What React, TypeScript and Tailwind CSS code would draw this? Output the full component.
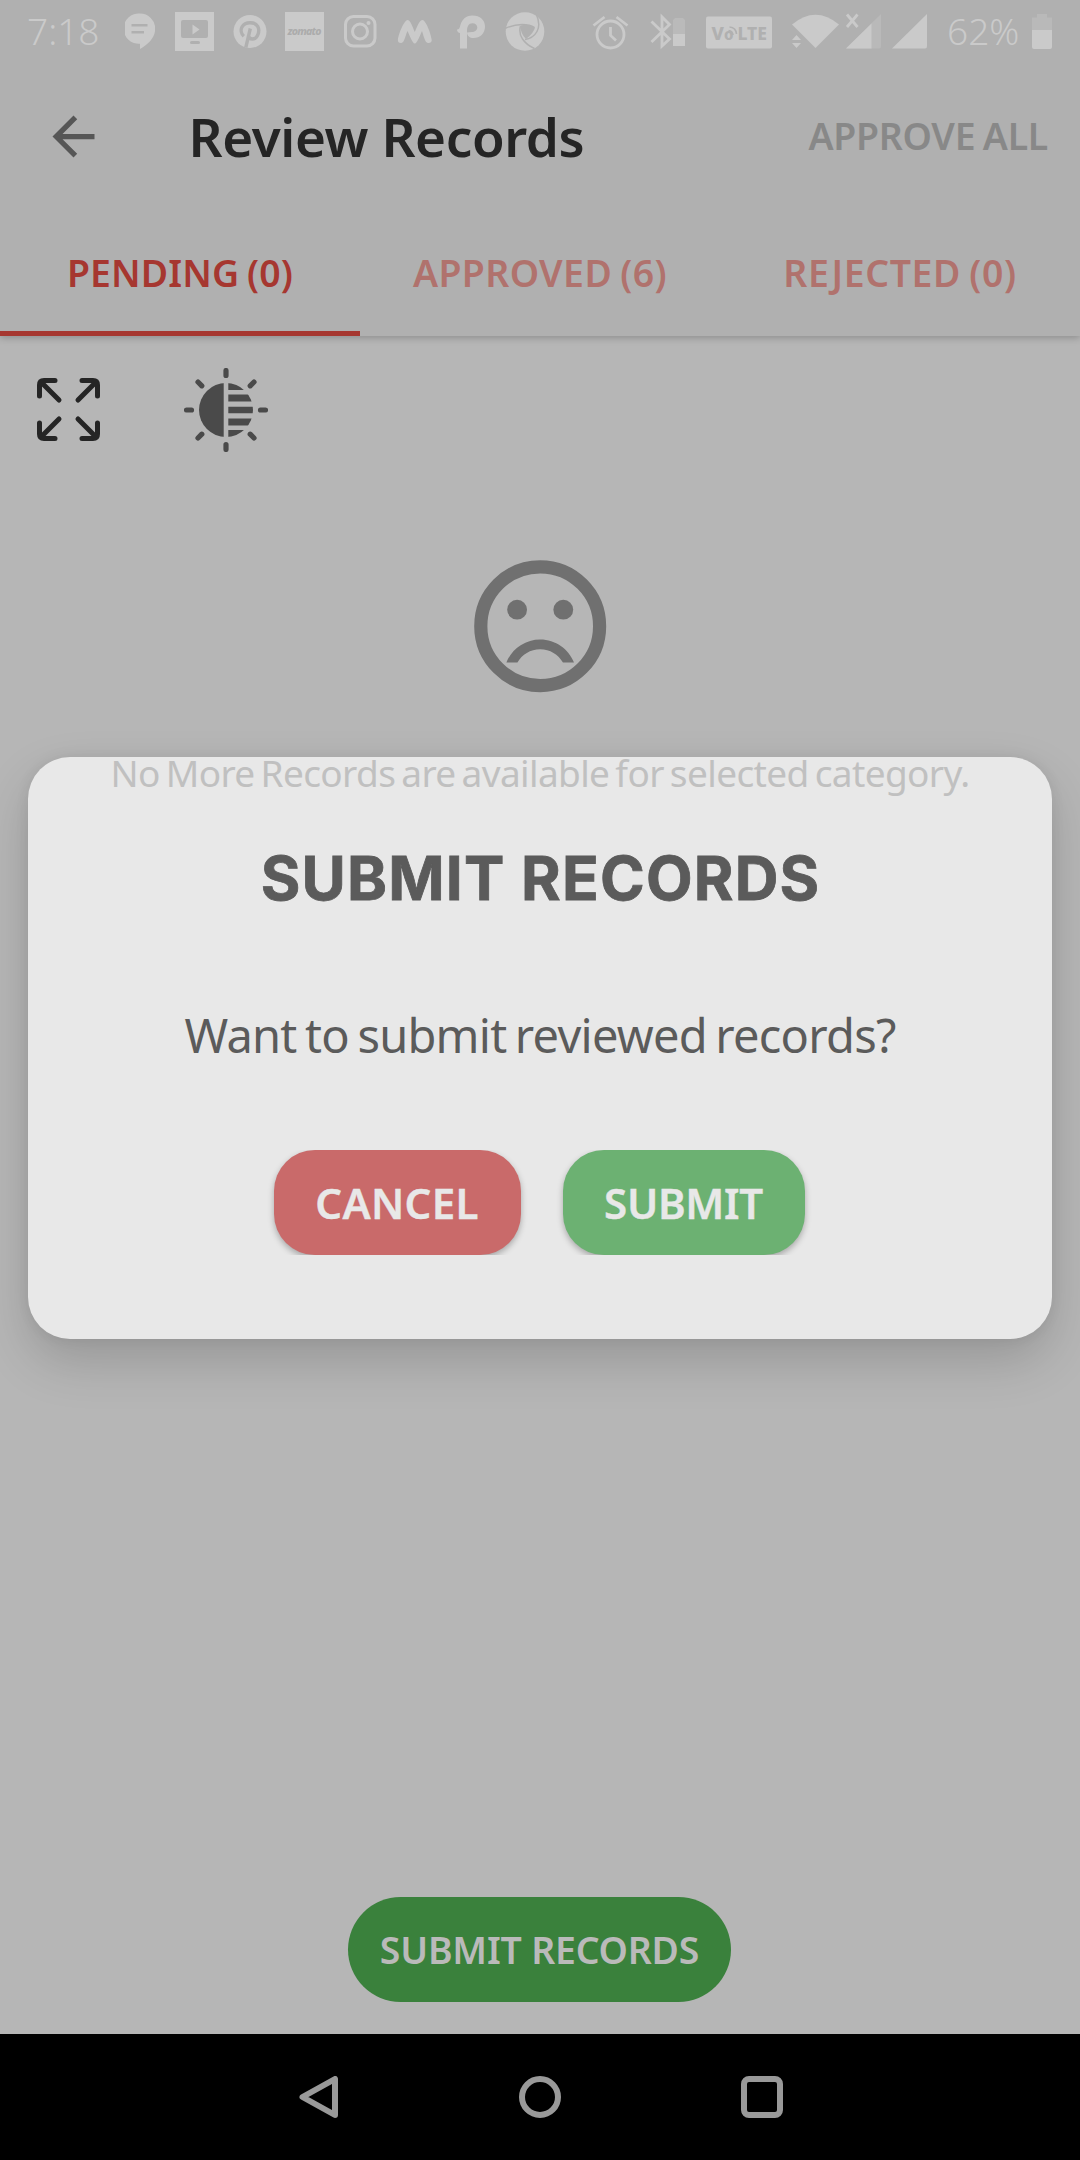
import type { ReactNode } from "react";

type GlyphProps = { x: number; w: number; className?: string; children: ReactNode };

/* Status glyphs share one 64px tall coordinate strip; each svg shows its own slice. */
function Glyph({ x, w, className = "", children }: GlyphProps) {
  return (
    <svg width={w} height={64} viewBox={`${x} 0 ${w} 64`} fill="currentColor" className={`shrink-0 ${className}`}>
      {children}
    </svg>
  );
}

function StatusBar() {
  return (
    <div className="flex h-[66px] items-start pl-[27px] text-[#cacaca]">
      <span className="w-[98px] text-[37px] leading-[61px] font-light">7:18</span>
      <Glyph x={125} w={30}>
        <path d="M140 13.500a15.200 15.200 0 1 0 0 30.300V49c9-5 15.200-12 15.200-20.300A15.200 15.200 0 0 0 140 13.500Z" />
        <path d="M131.500 24h16v2.600h-16zM131.500 31h12.500v2.600h-12.500z" fill="#b0b0b0" />
      </Glyph>
      <Glyph x={175} w={39} className="ml-[20px]">
        <path d="M175 12h39v39h-39z" />
        <rect x="181" y="20" width="27" height="18" rx="2" fill="#b0b0b0" />
        <rect x="190" y="41" width="10" height="3" rx="1.5" fill="#b0b0b0" />
        <path d="M192.500 24.500v10l7-5z" />
      </Glyph>
      <Glyph x={233} w={34} className="ml-[19px]">
        <circle cx="250" cy="31.500" r="16.500" />
        <path
          d="M243.800 36.200c-2.600-2.400-3.500-6.400-1.600-9.600 3-5 12.500-5.300 15.500-.2 2.600 4.600-.1 12.600-5.200 12.600-2.200 0-3.700-1.300-3.900-3M250.300 28.500l-4.500 19"
          fill="none"
          stroke="#b0b0b0"
          strokeWidth="3.400"
        />
      </Glyph>
      <Glyph x={285} w={39} className="ml-[18px]">
        <path d="M285 12h39v39h-39z" />
        <text x="304.500" y="34.500" textAnchor="middle" fontSize="10.500" fontWeight="800" fontStyle="italic" textLength="34" fill="#acacac">
          zomato
        </text>
      </Glyph>
      <Glyph x={343} w={34} className="ml-[19px]">
        <g fill="none" stroke="currentColor" strokeWidth="3">
          <rect x="345.500" y="16.500" width="29.500" height="29.500" rx="8" />
          <circle cx="360" cy="31.500" r="7.500" />
        </g>
        <circle cx="368.500" cy="23" r="2" />
      </Glyph>
      <Glyph x={397} w={36} className="ml-[20px]">
        <path d="M407.500 20c2.500 0 4 4 7.300 12 3.300-8 5.200-12 7.700-12 3 0 8.500 13 9.200 20 .3 3-4.200 4.500-6.200 1-1.200-2-2.500-7-3.500-10-2 4-4.700 12.500-7.200 12.500s-5.200-8.500-7.300-12.500c-1.500 3-2.600 8-3.800 10-2 3.500-6.100 2-5.800-1 .8-7 6.600-20 9.600-20Z" />
      </Glyph>
      <Glyph x={456} w={30} className="ml-[23px]">
        <path d="M457 29.500c2-.3 2.500-1 3-3 1.500-6.500 5.500-11 12.500-11 7.500 0 12.500 4.500 12.500 11 0 7-5 11.500-11.500 11.500-3.800 0-6.300-2-6.500-5.500l5-.5c2.800 0 5.300-2 5.300-4.500s-2-4.300-4.800-4.300c-4 0-5.500 3.500-5.500 8V48.500h-7V33c-1.500 0-3-1.500-3-3.500Z" />
      </Glyph>
      <Glyph x={504} w={41} className="ml-[18px]">
        <circle cx="525" cy="31.500" r="19.300" />
        <g fill="none" stroke="#b0b0b0" strokeWidth="1.500">
          <path d="M505 28.500q9-4 17-4t12.500 3M536 13.500q5 11 1 18t-12 8M520.500 26q-2 7 2 13t12 9.500" />
        </g>
        <path d="M520.500 25.500q8-2 14.500 2-1.500 6-9 11.500-5.500-5-5.500-13.500Z" fill="#b0b0b0" />
      </Glyph>
      <Glyph x={592} w={38} className="ml-[47px]">
        <g fill="none" stroke="currentColor" strokeWidth="2.800">
          <circle cx="610.500" cy="34.500" r="13.500" />
          <path d="M610.500 27v8.500l5.500 5M593.500 25.500l11-8.500M627.500 25.500l-11-8.500" />
        </g>
      </Glyph>
      <Glyph x={649} w={38} className="ml-[19px]">
        <path d="M651.500 21.500 669.500 39l-7.500 7V17l7.500 7.500L651.500 42" fill="none" stroke="currentColor" strokeWidth="2.800" />
        <path d="M673 20l2-2h8l2 2v14h-12z" opacity="0.400" />
        <path d="M673 34h12v12h-12z" />
      </Glyph>
      <Glyph x={706} w={66} className="ml-[19px]">
        <rect x="706" y="16.500" width="66" height="32" rx="2" />
        <g fill="#b0b0b0" fontWeight="800">
          <text x="711.500" y="40" fontSize="18.500">V</text>
          <text x="724" y="40" fontSize="15">o</text>
          <text x="737.500" y="40" fontSize="18.500" textLength="29.500" lengthAdjust="spacingAndGlyphs">LTE</text>
        </g>
        <path d="M728.500 30.500q4 .5 4.500 4.500M729.500 27q6.500.5 7 7" fill="none" stroke="#b0b0b0" strokeWidth="1.700" />
      </Glyph>
      <Glyph x={790} w={50} className="ml-[18px]">
        <path d="M815.500 48 792 24.500q23.500-19.500 47 0Z" />
        <path d="M791 34h10v14h-10z" fill="#b0b0b0" />
        <path d="M792 40l4.500-5 4.500 5zM792 43l4.500 5 4.500-5z" />
      </Glyph>
      <Glyph x={845} w={37} className="ml-[5px]">
        <path d="M847 14.500l10.500 12.500M857.500 14.500 847 27" stroke="currentColor" strokeWidth="2.800" />
        <path d="M881 14v32q0 2.500-2 2.500h-33Z" opacity="0.350" />
        <path d="M871.500 23.500v25H846Z" />
      </Glyph>
      <Glyph x={892} w={35} className="ml-[10px]">
        <path d="M927 14v32q0 2.500-2 2.500h-33Z" />
      </Glyph>
      <span className="ml-[20px] w-[85px] text-[37px] leading-[61px] font-light">62%</span>
      <Glyph x={1032} w={20}>
        <path d="M1037 14h10v3.500h5V31h-20V17.500h5z" opacity="0.350" />
        <path d="M1032 30h20v17q0 2-2 2h-16q-2 0-2-2z" />
      </Glyph>
    </div>
  );
}

function Toolbar() {
  return (
    <div className="flex h-[141px] items-center pr-8 pl-[42px]">
      <svg width="63" height="63" viewBox="0 0 24 24" fill="#565656">
        <path d="M20 11H7.830l5.590-5.590L12 4l-8 8 8 8 1.410-1.410L7.830 13H20v-2z" />
      </svg>
      <h1 className="ml-[83.5px] text-[53px] font-semibold tracking-[-0.4px] text-[#252525]">Review Records</h1>
      <span className="ml-auto text-[37.4px] font-semibold tracking-[-0.25px] text-[#888888] [word-spacing:-2px]">APPROVE ALL</span>
    </div>
  );
}

function Tabs() {
  return (
    <div className="grid h-[129px] grid-cols-3 text-center text-[37.4px] leading-[132px] font-semibold text-[#b0726d] [word-spacing:-2px]">
      <div className="h-[129px] border-b-[5px] border-[#a63730] tracking-[0.1px] text-[#a63730]">PENDING (0)</div>
      <div className="tracking-[0.4px]">APPROVED (6)</div>
      <div className="tracking-[0.6px]">REJECTED (0)</div>
    </div>
  );
}

function ExpandIcon() {
  return (
    <svg width="63" height="63" viewBox="0 0 63 63" fill="none" stroke="#252525" strokeWidth="5" strokeLinecap="round" strokeLinejoin="round">
      <path d="M18 2.500H7Q2.500 2.500 2.500 7V18M4 4 22 22" />
      <path d="M45 2.500H56Q60.500 2.500 60.500 7V18M59 4 41 22" />
      <path d="M18 60.500H7Q2.500 60.500 2.500 56V45M4 59 22 41" />
      <path d="M45 60.500H56Q60.500 60.500 60.500 56V45M59 59 41 41" />
    </svg>
  );
}

function BrightnessIcon() {
  return (
    <svg width="84" height="84" viewBox="-42 -42 84 84" fill="#4a4a4a">
      <clipPath id="disc">
        <circle r="27" />
      </clipPath>
      <g clipPath="url(#disc)">
        <path d="M-27-27h24.700v54H-27zM2.300-27H27v7H2.300zM2.300-15.500H27v7H2.300zM2.300-3.300H27v6.600H2.300zM2.300 8.500H27v7H2.300zM2.300 20H27v7H2.300z" />
      </g>
      <path
        d="M0-39.500v5M0 39.500v-5M-39.500 0h5M39.500 0h-5M-28-28l3.800 3.800M28-28l-3.800 3.800M-28 28l3.800-3.800M28 28l-3.800-3.800"
        stroke="#4a4a4a"
        strokeWidth="5.200"
        strokeLinecap="round"
      />
    </svg>
  );
}

function SadFace() {
  return (
    <svg width="158.400" height="158.400" viewBox="0 0 24 24" fill="#707070">
      <circle cx="12" cy="12" r="9" fill="none" stroke="#707070" strokeWidth="2" />
      <circle cx="8.500" cy="9.500" r="1.500" />
      <circle cx="15.500" cy="9.500" r="1.500" />
      <path d="M12 14c-2.330 0-4.320 1.450-5.120 3.500h1.670c.69-1.190 1.970-2 3.450-2s2.750.81 3.450 2h1.670c-.8-2.050-2.790-3.500-5.120-3.500z" />
    </svg>
  );
}

function SubmitDialog() {
  return (
    <div className="absolute top-[757px] left-7 flex h-[582px] w-[1024px] flex-col items-center rounded-[42px] bg-[#e8e8e8] pt-[76px] text-[#5b5b5b] shadow-[0_22px_50px_rgba(0,0,0,0.17),0_0_14px_rgba(0,0,0,0.07)]">
      <h2 className="pl-[1px] font-['Inter',sans-serif] text-[60.5px] leading-[90px] font-bold tracking-[1.2px] [-webkit-text-stroke:0.8px_#5b5b5b]">SUBMIT RECORDS</h2>
      <p className="mt-[80px] text-[47px] leading-[65px] font-normal tracking-[-0.75px] [word-spacing:-3px]">Want to submit reviewed records?</p>
      <div className="mt-[82px] mr-[2px] flex h-[105px] gap-[42px] text-[42px] leading-[105px] font-semibold text-[#e8e8e8] [clip-path:inset(0_-20px)]">
        <button className="w-[247px] rounded-[41px] bg-[#c96a6a] tracking-[0.3px] shadow-[0_3px_6px_rgba(0,0,0,0.28)] [-webkit-text-stroke:0.4px_#e8e8e8]">CANCEL</button>
        <button className="w-[242px] rounded-[41px] bg-[#6cb172] tracking-[-0.3px] shadow-[0_3px_6px_rgba(0,0,0,0.28)] [-webkit-text-stroke:0.4px_#e8e8e8]">SUBMIT</button>
      </div>
    </div>
  );
}

function NavigationBar() {
  return (
    <div className="flex h-[126px] items-center justify-center gap-[180px] bg-black pr-[1px]">
      <svg width="42" height="42" viewBox="0 0 42 42" fill="none" stroke="#999999" strokeWidth="6" strokeLinejoin="round">
        <path d="M38 3v36L5.500 21Z" />
      </svg>
      <svg width="42" height="42" viewBox="0 0 42 42" fill="none" stroke="#999999" strokeWidth="6">
        <circle cx="21" cy="21" r="18" />
      </svg>
      <svg width="42" height="42" viewBox="0 0 42 42" fill="none" stroke="#999999" strokeWidth="6">
        <rect x="3" y="3" width="36" height="36" rx="5" />
      </svg>
    </div>
  );
}

export default function App() {
  return (
    <div className="relative flex h-[2160px] w-[1080px] flex-col overflow-hidden bg-[#b6b6b6] font-['Noto_Sans',sans-serif]">
      <header className="bg-[#b0b0b0] shadow-[0_2px_7px_rgba(0,0,0,0.22)]">
        <StatusBar />
        <Toolbar />
        <Tabs />
      </header>
      <main className="flex flex-1 flex-col items-center">
        <div className="flex h-[147px] items-center gap-[84px] self-start pl-[37px]">
          <ExpandIcon />
          <BrightnessIcon />
        </div>
        <div className="mt-[63.5px] flex">
          <SadFace />
        </div>
        <p className="relative z-20 mt-[43px] text-[37px] leading-[50px] font-normal tracking-[-0.62px] text-[#c0c0c0] [word-spacing:-3px]">
          No More Records are available for selected category.
        </p>
        <button className="mt-auto mr-[1px] mb-8 h-[105px] w-[383px] rounded-full bg-[#3a813c] text-[37.4px] leading-[105px] font-semibold tracking-[-0.2px] text-[#bababa]">
          SUBMIT RECORDS
        </button>
      </main>
      <NavigationBar />
      <SubmitDialog />
    </div>
  );
}
